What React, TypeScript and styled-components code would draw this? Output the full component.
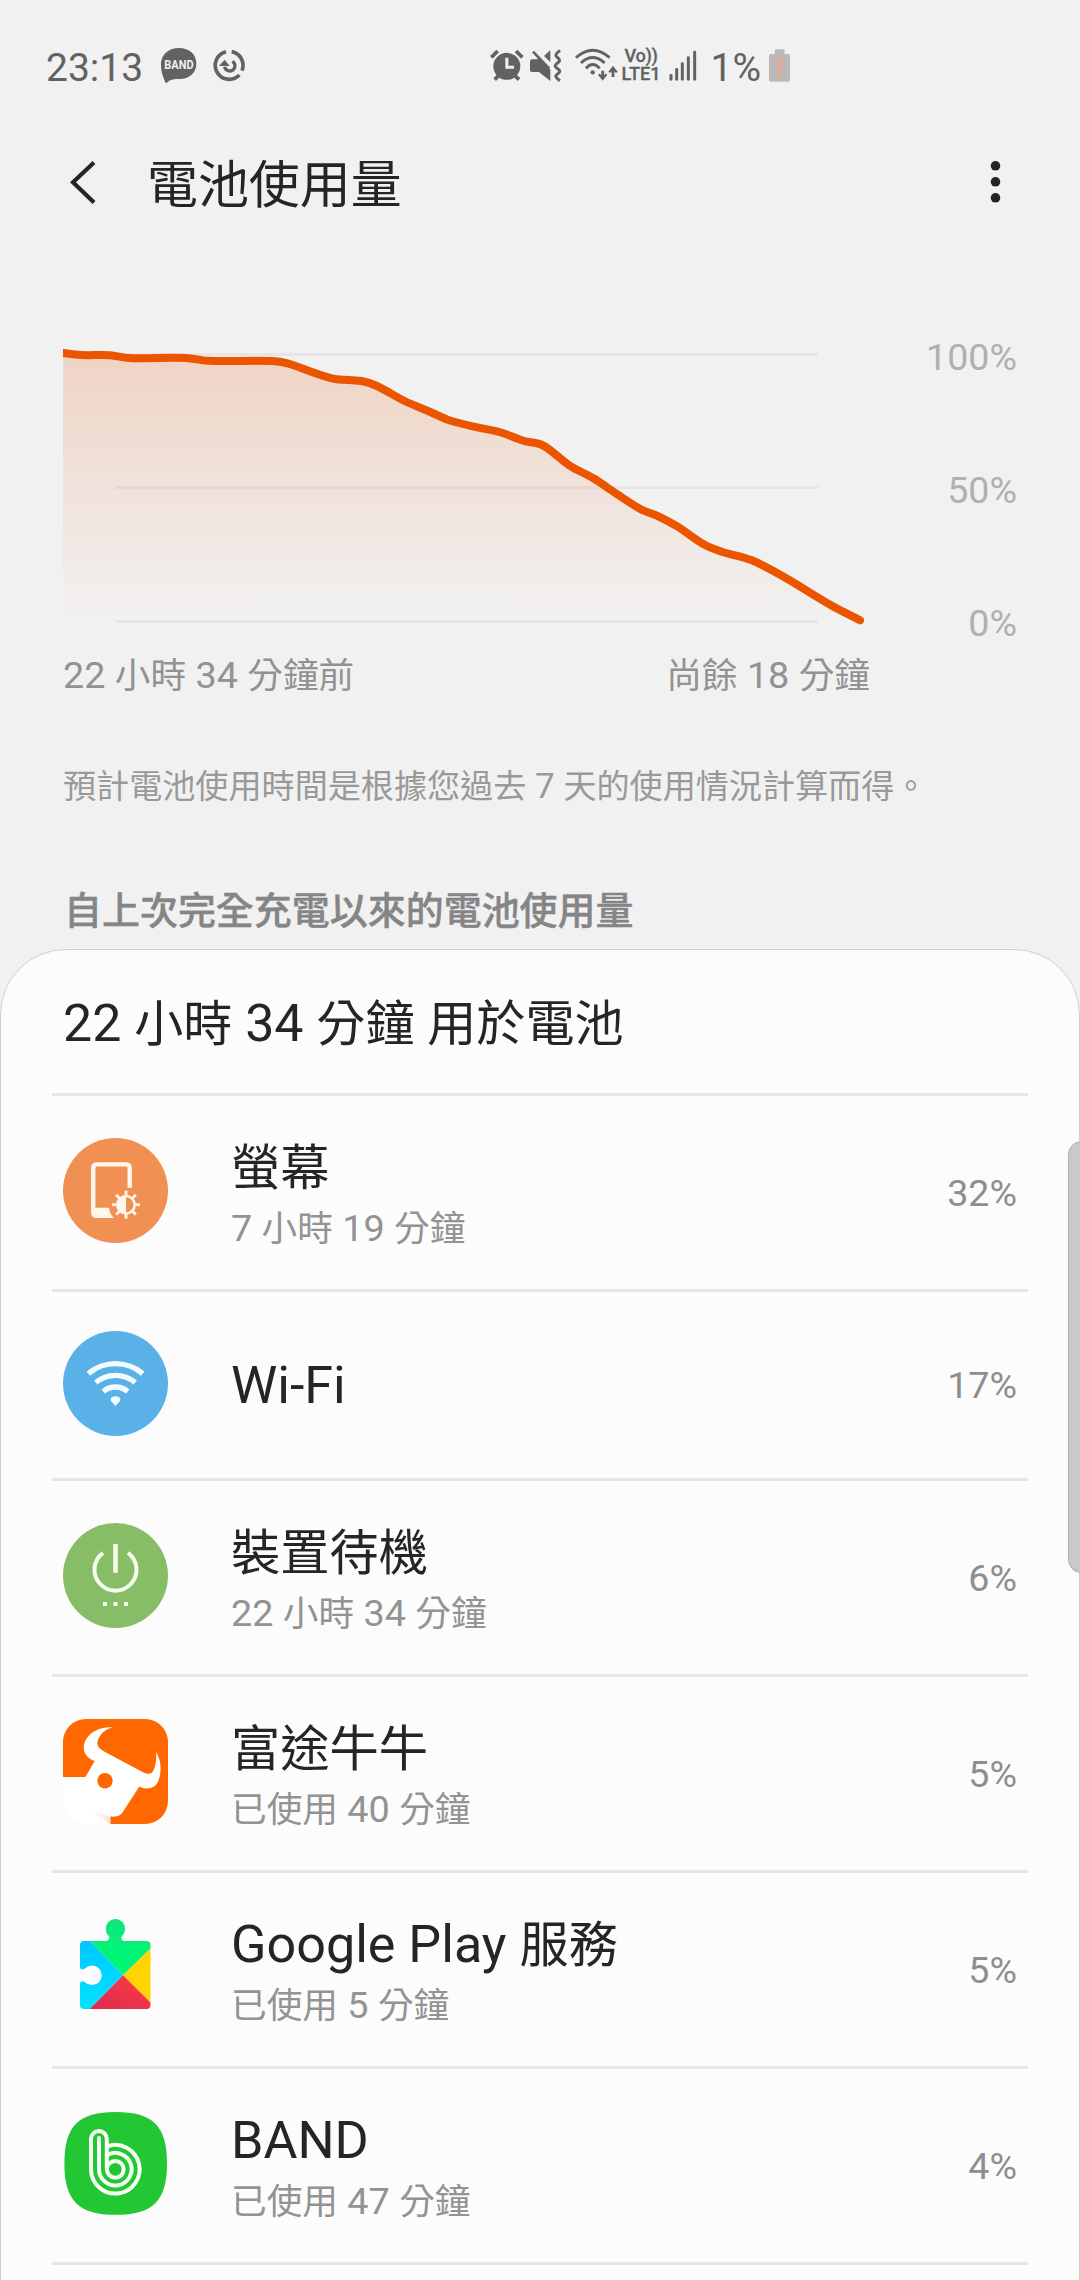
import React from 'react';
import styled, { createGlobalStyle } from 'styled-components';

const GlobalStyle = createGlobalStyle`
  * { box-sizing: border-box; }
  html, body { margin: 0; padding: 0; background: #f1f1f1; }
  body { font-family: Roboto, 'Noto Sans CJK TC', sans-serif; }
  svg { display: block; }
`;

/* ---------- text ---------- */

const Han = styled.span`
  font-family: 'Noto Sans CJK TC', sans-serif;
  font-size: 0.945em;
  line-height: 0;
`;

/** Sets Han runs slightly smaller than the Latin digits around them. */
function Mixed({ children }: { children: string }) {
  const runs = children.split(/([\u3000-\u9fff\uff00-\uffef]+)/).filter(Boolean);
  return (
    <>
      {runs.map((run, i) =>
        /[\u3000-\u9fff]/.test(run) ? <Han key={i}>{run}</Han> : <React.Fragment key={i}>{run}</React.Fragment>
      )}
    </>
  );
}

/* ---------- layout ---------- */

const Screen = styled.div`
  width: 1080px;
  height: 2280px;
  overflow: hidden;
  display: flex;
  flex-direction: column;
  background: #f1f1f1;
  color: #252525;
  position: relative;
`;

const StatusBar = styled.div`
  height: 136px;
  flex: none;
  padding: 35px 0 0 46px;
  display: flex;
  align-items: flex-start;
  color: #626262;
`;

const StatusText = styled.span<{ $width: number }>`
  width: ${(p) => p.$width}px;
  font-size: 39px;
  line-height: 66px;
  white-space: nowrap;
  font-weight: 400;
`;

const StatusSpacer = styled.div<{ $w: number }>`
  width: ${(p) => p.$w}px;
  flex: none;
`;

const StatusIcon = styled.svg<{ $w: number; $ml?: number }>`
  width: ${(p) => p.$w}px;
  height: 60px;
  flex: none;
  margin-left: ${(p) => p.$ml ?? 0}px;
  overflow: visible;
`;

const Network = styled.div`
  width: 40px;
  margin-left: 4.5px;
  padding-top: 12px;
  display: flex;
  flex-direction: column;
  font-weight: 500;
  font-size: 18.2px;
  line-height: 18px;
  white-space: nowrap;
  -webkit-text-stroke: 0.3px #626262;
`;

const VoLabel = styled.span`
  padding-left: 3px;
  letter-spacing: -0.3px;
`;

const LteLabel = styled.span`
  letter-spacing: -0.1px;
`;

const AppBar = styled.header`
  height: 91px;
  flex: none;
  padding: 0 78px 0 64px;
  display: flex;
  align-items: center;
`;

const Title = styled.h1`
  margin: 6px 0 0 49px;
  flex: 1;
  font-size: 53.9px;
  font-weight: 400;
  line-height: 80px;
`;

const ChartSection = styled.section`
  height: 408px;
  flex: none;
  margin-top: 93px;
  padding: 0 63px;
  display: flex;
  flex-direction: column;
`;

const ChartRow = styled.div`
  display: flex;
  height: 320px;
`;

const ChartSvg = styled.svg`
  width: 817px;
  height: 320px;
  overflow: visible;
  flex: none;
`;

const AxisLabels = styled.div`
  flex: 1;
  display: flex;
  flex-direction: column;
  padding-top: 15px;
  gap: 89px;
  align-items: flex-end;
  font-size: 37.6px;
  line-height: 44px;
  color: #b0b0b0;
`;

const RangeLabels = styled.div`
  width: 807px;
  margin-top: 11px;
  display: flex;
  justify-content: space-between;
  font-size: 37.75px;
  line-height: 48px;
  color: #929292;
`;

const Note = styled.p`
  margin: 0;
  padding: 34px 0 0 63px;
  font-size: 35.03px;
  line-height: 50px;
  color: #999;
`;

const SectionTitle = styled.h2`
  margin: 72px 0 0;
  padding-left: 64px;
  font-size: 40.2px;
  line-height: 54px;
  font-weight: 500;
  color: #858585;
  -webkit-text-stroke: 0.4px #858585;
`;

const Card = styled.section`
  flex: none;
  margin-top: 11px;
  height: 1400px;
  border: 1px solid #d0d0d0;
  border-radius: 66px 66px 0 0;
  background: #fcfcfc;
  padding: 0 51px;
`;

const Summary = styled.div`
  height: 146px;
  border-bottom: 3px solid #e6e6e6;
  padding: 42px 0 0 11px;
  font-size: 51.9px;
  line-height: 64px;
`;

const Row = styled.div<{ $single?: boolean }>`
  height: ${(p) => (p.$single ? 189 : 196)}px;
  border-bottom: 3px solid #e6e6e6;
  padding: 0 11px;
  display: flex;
  align-items: center;
`;

const AppIcon = styled.svg`
  width: 105px;
  height: 105px;
  flex: none;
  margin-bottom: 4px;
`;

const Labels = styled.div<{ $single?: boolean }>`
  flex: 1;
  margin: ${(p) => (p.$single ? 2 : 5)}px 0 0 63px;
  display: flex;
  flex-direction: column;
  gap: 6px;
`;

const Name = styled.span`
  font-size: 52.1px;
  line-height: 60px;
`;

const Detail = styled.span`
  font-size: 37.75px;
  line-height: 48px;
  color: #939393;
`;

const Percent = styled.span`
  font-size: 37.6px;
  line-height: 46px;
  color: #8e8e8e;
`;

const EdgeHandle = styled.div`
  position: absolute;
  right: -2px;
  top: 1141px;
  width: 14px;
  height: 432px;
  border: 1px solid #b3b1af;
  border-radius: 14px 0 0 14px;
  background: #cbc9c6;
`;

/* ---------- chart ---------- */

const LEVELS: [number, number][] = [
  [63, 353], [81, 355], [110, 355.3], [129, 358], [186, 358], [208, 360.8], [272, 361],
  [287.5, 363.3], [332, 378.3], [361.5, 381], [377, 386], [404.6, 401], [430.4, 412],
  [447.6, 419.7], [478.6, 427.7], [499.3, 432], [523.4, 440.7], [543.4, 445.6],
  [569.3, 465.3], [593.4, 478.3], [615.8, 493.3], [639.9, 508.7], [660.5, 517.3],
  [677.7, 526.7], [703.6, 544.3], [722.5, 552], [751.8, 560.3], [784.5, 577.3],
  [831, 605.3], [860, 620.3],
];

function smoothPath(points: [number, number][]) {
  let d = `M${points[0][0]} ${points[0][1]}`;
  for (let i = 0; i < points.length - 1; i++) {
    const p0 = points[i - 1] ?? points[i];
    const p1 = points[i];
    const p2 = points[i + 1];
    const p3 = points[i + 2] ?? p2;
    const span = (p2[0] - p1[0]) / 3;
    const m1 = (p2[1] - p0[1]) / (p2[0] - p0[0]);
    const m2 = (p3[1] - p1[1]) / (p3[0] - p1[0]);
    d += `C${p1[0] + span} ${p1[1] + m1 * span} ${p2[0] - span} ${p2[1] - m2 * span} ${p2[0]} ${p2[1]}`;
  }
  return d;
}

function BatteryChart() {
  const line = smoothPath(LEVELS);
  return (
    <ChartSvg viewBox="63 320 817 320">
      <defs>
        <linearGradient id="fade" gradientUnits="userSpaceOnUse" x1="0" y1="350" x2="0" y2="620">
          <stop offset="0" stopColor="#ea5504" stopOpacity="0.19" />
          <stop offset="1" stopColor="#ea5504" stopOpacity="0" />
        </linearGradient>
        <clipPath id="plot"><rect x="63" y="320" width="817" height="320" /></clipPath>
      </defs>
      {[353, 486, 620].map((y) => <rect key={y} x="115" y={y} width="703" height="3" fill="#e6e6e6" />)}
      <path d={`${line}L63 620Z`} fill="url(#fade)" />
      <path d={line} fill="none" stroke="#eb5500" strokeWidth="8" strokeLinecap="round" strokeLinejoin="round" clipPath="url(#plot)" />
    </ChartSvg>
  );
}

/* ---------- status icons ---------- */

const INK = '#626262';

const BandBubble = () => (
  <StatusIcon $w={36} $ml={6} viewBox="364 0 108 180">
    <path d="M418 39C449 39 470 58 470 86C470 113 449 132 420 132C405 132 393 134 388 138C385 140 382 143 379 145C376 140 371 130 368 118C365 108 364 98 364 86C365 57 388 39 418 39Z" fill={INK} />
    <text x="374" y="102" fontFamily="Roboto" fontWeight="700" fontSize="36" textLength="88" lengthAdjust="spacingAndGlyphs" fill="#f1f1f1">BAND</text>
  </StatusIcon>
);

const SyncRing = () => (
  <StatusIcon $w={32} $ml={15.5} viewBox="520 0 96 180">
    <g fill="none" stroke={INK} strokeWidth="11">
      <path d="M559 50A42 42 0 1 0 599 120" />
      <path d="M576 50A42 42 0 0 1 607 107" />
      <path d="M578 79A15.500 15.500 0 1 1 555 95" strokeWidth="10" />
    </g>
    <path d="M538 93L555 74L570 93Z" fill={INK} />
  </StatusIcon>
);

const Alarm = () => (
  <StatusIcon $w={34} viewBox="31 0 102 180">
    <circle cx="81.500" cy="94" r="40.500" fill={INK} />
    <g fill="none" stroke={INK} strokeWidth="11">
      <path d="M35 67L54 48M128 67L109 48M45 134L60 119M118 134L103 119" />
    </g>
    <path d="M81.500 68V97H103" fill="none" stroke="#f1f1f1" strokeWidth="9" />
  </StatusIcon>
);

const MuteVibrate = () => (
  <StatusIcon $w={32} $ml={6} viewBox="150 0 96 180">
    <path d="M150 79Q150 73 156 73H171L177 69L211 104V138L177 111H156Q150 111 150 105Z" fill={INK} />
    <path d="M211 45V81L192 63Z" fill={INK} />
    <path d="M159 50L208 101" stroke={INK} strokeWidth="8" />
    <path d="M240 46C222 60 226 62 235 70C243 77 238 79 229 87C222 93 226 95 234 102C243 109 240 112 230 119C225 124 228 129 240 137" fill="none" stroke={INK} strokeWidth="9" />
  </StatusIcon>
);

const WifiTraffic = () => (
  <StatusIcon $w={42} $ml={13} viewBox="284 0 126 180">
    <g fill="none" stroke={INK} strokeWidth="8.500">
      <path d="M287 68Q337 23 388 68" />
      <path d="M302 84Q337 51 373 84" />
      <path d="M317 100Q337 77 358 100" />
      <path d="M367 107V130M398 126V100" />
    </g>
    <circle cx="337" cy="112" r="6.500" fill={INK} />
    <path d="M353 119L367 137L381 119L376 116L367 123L358 116ZM384 110L398 92L412 110L407 114L398 106L389 114Z" fill={INK} />
  </StatusIcon>
);

const SignalBars = () => (
  <StatusIcon $w={28} $ml={7} viewBox="566 0 84 180">
    {[[572, 117], [589, 99], [606, 82], [624, 64], [643, 47]].map(([x, y]) => (
      <rect key={x} x={x - 4.5} y={y} width="9" height={137 - y} rx="4" fill={INK} />
    ))}
  </StatusIcon>
);

const LowBattery = () => (
  <StatusIcon $w={21} $ml={5.5} viewBox="867 0 63 180">
    <path d="M884 57V47Q884 43 888 43H910Q914 43 914 47V57H925Q930 57 930 62V135Q930 140 925 140H872Q867 140 867 135V62Q867 57 872 57Z" fill="#bababa" />
    <path d="M892 70H906L903 110H895Z" fill="#f2a48d" />
    <circle cx="899" cy="121" r="6.500" fill="#f2a48d" />
  </StatusIcon>
);

/* ---------- app icons ---------- */

const DisplayIcon = () => (
  <AppIcon viewBox="0 0 105 105">
    <circle cx="52.500" cy="52.500" r="52.500" fill="#f09053" />
    <path d="M66.700 49.700V30Q66.700 26.400 63 26.400H34Q30.200 26.400 30.200 30V74Q30.200 77.800 34 77.800H44" fill="none" stroke="#fff6ec" strokeWidth="4.400" />
    <path d="M30 69.700H46Q46.500 76 51 80H33Q30 80 29 77Z" fill="#fff6ec" />
    <g stroke="#fff6ec" strokeWidth="2.800">
      {Array.from({ length: 8 }, (_, i) => (
        <path key={i} d="M63 57.500V52.700" transform={`rotate(${i * 45} 63 66.700)`} />
      ))}
    </g>
    <circle cx="63" cy="66.700" r="8.700" fill="none" stroke="#fff6ec" strokeWidth="2.500" />
    <path d="M63 58.500A8.200 8.200 0 0 0 63 74.900Z" fill="#fff6ec" />
  </AppIcon>
);

const WifiIcon = () => (
  <AppIcon viewBox="0 0 105 105">
    <circle cx="52.500" cy="52.500" r="52.500" fill="#5ab1e7" />
    <g fill="none" stroke="#f3fbff" strokeWidth="5.300">
      {[42.3, 30.7, 19].map((r) => (
        <path key={r} d={`M${52.5 - r * 0.643} ${75 - r * 0.766}A${r} ${r} 0 0 1 ${52.5 + r * 0.643} ${75 - r * 0.766}`} />
      ))}
    </g>
    <path d="M52.500 75L47.600 69.500Q47.300 65.400 52.500 65.300Q57.700 65.400 57.400 69.500Z" fill="#f3fbff" />
  </AppIcon>
);

const StandbyIcon = () => (
  <AppIcon viewBox="0 0 105 105">
    <circle cx="52.500" cy="52.500" r="52.500" fill="#87bd67" />
    <path d="M40 29.800A21 21 0 1 0 65 29.800" fill="none" stroke="#f4ffec" strokeWidth="4" />
    <path d="M50.200 21H54.800V49.700H50.200ZM40 79h4v4h-4ZM50.500 79h4v4h-4ZM61 79h4v4h-4Z" fill="#f4ffec" />
  </AppIcon>
);

const FutuIcon = () => (
  <AppIcon viewBox="0 0 105 105">
    <defs>
      <clipPath id="futu"><rect width="105" height="105" rx="23" /></clipPath>
      <linearGradient id="futuShade" x1="0" y1="0" x2="1" y2="0">
        <stop offset="0" stopColor="#fff" />
        <stop offset="1" stopColor="#ffe3d0" />
      </linearGradient>
    </defs>
    <g clipPath="url(#futu)">
      <path d="M0 0H105V105H46V70L30 59H0Z" fill="#ff6700" />
      <path d="M50 8.300C41 7.500 32 10.500 26.500 16C21 21.500 19.500 28 21.500 33C23.500 38 27.500 40.500 31.700 42L22.400 58H0V105H47.300V97.500C52 98 57 97.500 59.500 93.500L76.300 67.500C80 70 87 70 91 67.500C95.500 64.500 97.500 57 97.600 50C97.700 43 96 38 93 32.700C93.500 39 93 48 89.500 53C87 55.500 84 55 80 53.200L40.300 32C36 29.500 33.800 27 34.400 23.500C35.500 16.500 41 10.500 50 8.300Z" fill="#fff" />
      <path d="M28 92L47.300 97.500V105Z" fill="url(#futuShade)" />
      <circle cx="42" cy="61.700" r="7.700" fill="#ff6700" />
    </g>
  </AppIcon>
);

const PlayServicesIcon = () => (
  <AppIcon viewBox="0 0 105 105">
    <defs>
      <linearGradient id="blue" x1="0" y1="0" x2="0" y2="1">
        <stop offset="0" stopColor="#00c6ff" />
        <stop offset="1" stopColor="#00e4ff" />
      </linearGradient>
      <linearGradient id="red" x1="1" y1="0" x2="0" y2="1">
        <stop offset="0" stopColor="#ff3a44" />
        <stop offset="1" stopColor="#d92c50" />
      </linearGradient>
      <linearGradient id="green" x1="0" y1="0" x2="0" y2="1">
        <stop offset="0" stopColor="#12e17b" />
        <stop offset="0.600" stopColor="#00f576" />
      </linearGradient>
      <clipPath id="puzzle">
        <path d="M21 26H43C45.500 26 47 23.500 46 21.500C44 19.500 42.800 16.500 42.800 13.500A9.600 9.600 0 0 1 62 13.500C62 16.500 60.800 19.500 58.700 21.500C57.700 23.500 59 26 61.500 26H83.500Q87.500 26 87.500 30V90Q87.500 94 83.500 94H21Q17 94 17 90V69C17 66 19.500 65.300 22 67.200A9.800 9.800 0 1 0 22 53.400C19.500 55.300 17 54.600 17 51.600V30Q17 26 21 26Z" />
      </clipPath>
    </defs>
    <g clipPath="url(#puzzle)">
      <path d="M15 0H90V31L60 60.300L25 24Z" fill="url(#green)" />
      <path d="M90 31V90L60 60.300Z" fill="#ffd400" />
      <path d="M60 60.300L90 90V96H24.500Z" fill="url(#red)" />
      <path d="M15 24H25L60 60.300L24.500 96H15Z" fill="url(#blue)" />
    </g>
  </AppIcon>
);

const BandIcon = () => (
  <AppIcon viewBox="0 0 105 105">
    <path d="M52.700 1C90 1 104 15 104 52.400C104 89.700 90 103.700 52.700 103.700C15.400 103.700 1.400 89.700 1.400 52.400C1.400 15 15.400 1 52.700 1Z" fill="#23c633" />
    <g fill="none" stroke="#f6fff4" strokeWidth="4">
      <path d="M43.800 58V28A7.900 7.900 0 0 0 28 28V58.300A24.300 24.300 0 1 0 43.800 35.500" />
      <path d="M36 27V58.300A16.300 16.300 0 1 0 43.800 44.300" strokeLinecap="round" />
      <circle cx="52.300" cy="58.300" r="8.400" />
    </g>
  </AppIcon>
);

/* ---------- page ---------- */

const USAGE = [
  { name: '螢幕', detail: '7 小時 19 分鐘', percent: '32%', Icon: DisplayIcon },
  { name: 'Wi-Fi', detail: '', percent: '17%', Icon: WifiIcon },
  { name: '裝置待機', detail: '22 小時 34 分鐘', percent: '6%', Icon: StandbyIcon },
  { name: '富途牛牛', detail: '已使用 40 分鐘', percent: '5%', Icon: FutuIcon },
  { name: 'Google Play 服務', detail: '已使用 5 分鐘', percent: '5%', Icon: PlayServicesIcon },
  { name: 'BAND', detail: '已使用 47 分鐘', percent: '4%', Icon: BandIcon },
];

export default function App() {
  return (
    <Screen>
      <GlobalStyle />
      <StatusBar>
        <StatusText $width={109}>23:13</StatusText>
        <BandBubble />
        <SyncRing />
        <StatusSpacer $w={245.5} />
        <Alarm />
        <MuteVibrate />
        <WifiTraffic />
        <Network>
          <VoLabel>Vo))</VoLabel>
          <LteLabel>LTE1</LteLabel>
        </Network>
        <SignalBars />
        <StatusSpacer $w={14} />
        <StatusText $width={53}>1%</StatusText>
        <LowBattery />
      </StatusBar>

      <AppBar>
        <svg width="34" height="46" viewBox="64 158 34 46">
          <path d="M94 161.500L73 181.200L94 201.500" fill="none" stroke="#252525" strokeWidth="4.200" />
        </svg>
        <Title><Mixed>電池使用量</Mixed></Title>
        <svg width="14" height="46" viewBox="988.500 158.500 14 46">
          {[165.3, 181.3, 197.3].map((y) => <circle key={y} cx="996" cy={y} r="4.800" fill="#252525" />)}
        </svg>
      </AppBar>

      <ChartSection>
        <ChartRow>
          <BatteryChart />
          <AxisLabels>
            <span>100%</span>
            <span>50%</span>
            <span>0%</span>
          </AxisLabels>
        </ChartRow>
        <RangeLabels>
          <span><Mixed>22 小時 34 分鐘前</Mixed></span>
          <span><Mixed>尚餘 18 分鐘</Mixed></span>
        </RangeLabels>
      </ChartSection>

      <Note><Mixed>預計電池使用時間是根據您過去 7 天的使用情況計算而得。</Mixed></Note>
      <SectionTitle><Mixed>自上次完全充電以來的電池使用量</Mixed></SectionTitle>

      <Card>
        <Summary><Mixed>22 小時 34 分鐘 用於電池</Mixed></Summary>
        {USAGE.map(({ name, detail, percent, Icon }) => (
          <Row key={name} $single={!detail}>
            <Icon />
            <Labels $single={!detail}>
              <Name><Mixed>{name}</Mixed></Name>
              {detail && <Detail><Mixed>{detail}</Mixed></Detail>}
            </Labels>
            <Percent>{percent}</Percent>
          </Row>
        ))}
      </Card>
      <EdgeHandle />
    </Screen>
  );
}
